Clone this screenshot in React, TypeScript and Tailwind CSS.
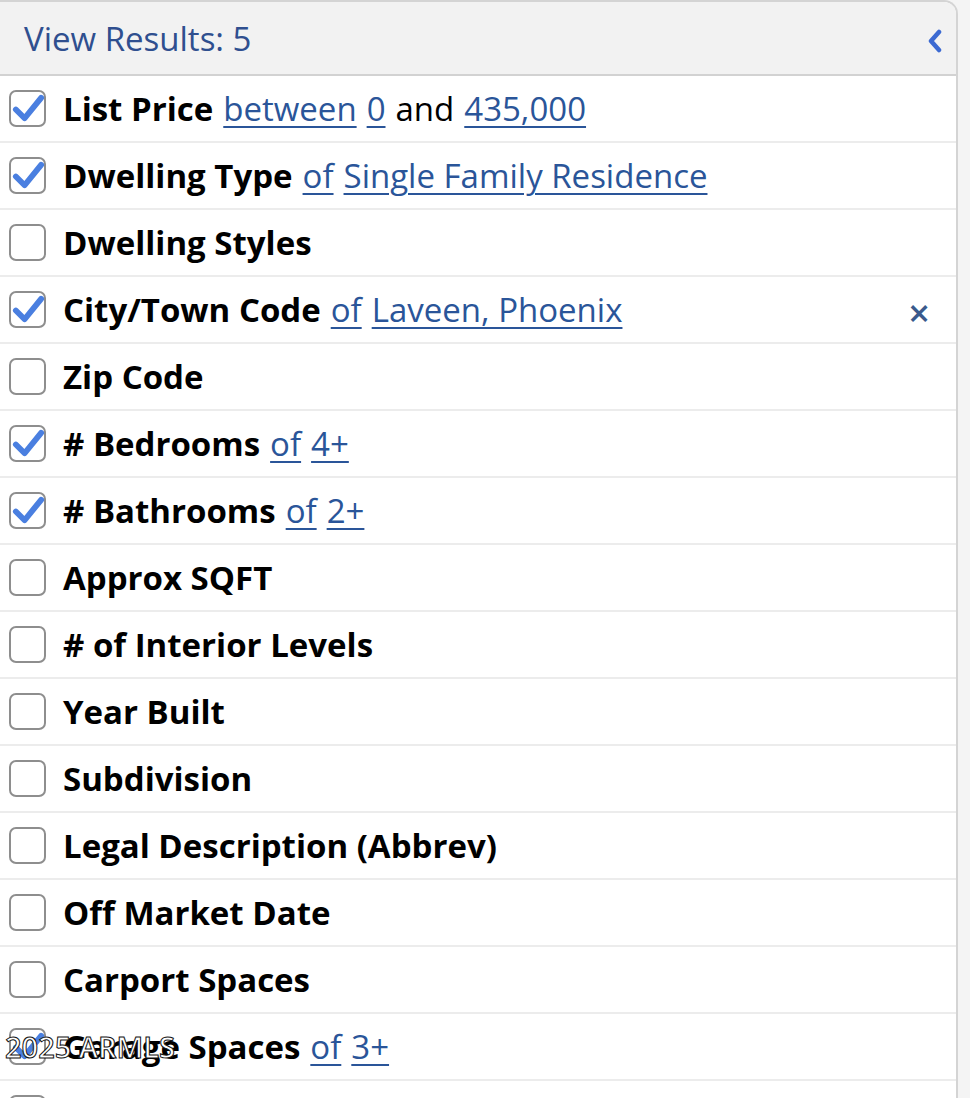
import React from 'react';

type Row = {
  label: string;
  checked: boolean;
  parts?: { text: string; link: boolean }[];
  removable?: boolean;
  watermark?: boolean;
};

const rows: Row[] = [
  {
    label: 'List Price',
    checked: true,
    parts: [
      { text: 'between', link: true },
      { text: '0', link: true },
      { text: 'and', link: false },
      { text: '435,000', link: true },
    ],
  },
  {
    label: 'Dwelling Type',
    checked: true,
    parts: [
      { text: 'of', link: true },
      { text: 'Single Family Residence', link: true },
    ],
  },
  { label: 'Dwelling Styles', checked: false },
  {
    label: 'City/Town Code',
    checked: true,
    removable: true,
    parts: [
      { text: 'of', link: true },
      { text: 'Laveen, Phoenix', link: true },
    ],
  },
  { label: 'Zip Code', checked: false },
  {
    label: '# Bedrooms',
    checked: true,
    parts: [
      { text: 'of', link: true },
      { text: '4+', link: true },
    ],
  },
  {
    label: '# Bathrooms',
    checked: true,
    parts: [
      { text: 'of', link: true },
      { text: '2+', link: true },
    ],
  },
  { label: 'Approx SQFT', checked: false },
  { label: '# of Interior Levels', checked: false },
  { label: 'Year Built', checked: false },
  { label: 'Subdivision', checked: false },
  { label: 'Legal Description (Abbrev)', checked: false },
  { label: 'Off Market Date', checked: false },
  { label: 'Carport Spaces', checked: false },
  {
    label: 'Garage Spaces',
    checked: true,
    watermark: true,
    parts: [
      { text: 'of', link: true },
      { text: '3+', link: true },
    ],
  },
  { label: '', checked: false },
];

const Checkbox = ({ checked }: { checked: boolean }) => (
  <div className="relative w-[37px] h-[37px] shrink-0 rounded-[7px] border-2 border-[#8e8e8e] bg-white">
    {checked && (
      <svg viewBox="0 0 36 36" className="absolute left-[0px] top-[-1px] w-[35px] h-[35px]">
        <path
          d="M5 19 L14 28 L31 7"
          fill="none"
          stroke="#4a7fe0"
          strokeWidth="6"
          strokeLinecap="round"
          strokeLinejoin="round"
        />
      </svg>
    )}
  </div>
);

export default function App() {
  return (
    <div className="w-[970px] h-[1098px] overflow-hidden bg-[#f4f4f4] font-['Open_Sans',sans-serif]">
      <div className="w-[958px] bg-white border-r-2 border-t-2 border-[#d4d4d4] rounded-tr-[14px]">
        <div className="h-[74px] flex items-center justify-between pl-[24px] pr-[14px] bg-[#f2f2f2] border-b-2 border-[#d2d2d2] rounded-tr-[12px]">
          <span className="text-[33px] text-[#2f4f8f] leading-none">View Results: 5</span>
          <svg viewBox="0 0 14 24" className="w-[14px] h-[26px] mt-[6px]">
            <path d="M11 3 L3 12 L11 21" fill="none" stroke="#3c6ad2" strokeWidth="4.5" strokeLinecap="round" strokeLinejoin="round" />
          </svg>
        </div>
        {rows.map((r, i) => (
          <div
            key={i}
            className="relative h-[67px] flex items-center pl-[9px] pr-[24px] border-b-2 border-[#ececec]"
          >
            <Checkbox checked={r.checked} />
            <div className="ml-[17px] flex items-baseline gap-[10px] text-[33px] leading-none whitespace-nowrap">
              <span className="font-bold text-black">{r.label}</span>
              {r.parts?.map((p, j) =>
                p.link ? (
                  <span key={j} className="text-[#2a5599] underline underline-offset-[5px] decoration-2">
                    {p.text}
                  </span>
                ) : (
                  <span key={j} className="text-black">
                    {p.text}
                  </span>
                )
              )}
            </div>
            {r.removable && (
              <span className="ml-auto mr-[2px] text-[#3a5a8c] text-[38px] font-semibold leading-none mt-[4px]">×</span>
            )}
            {r.watermark && (
              <span className="absolute left-[5px] top-[18px] text-[29px] font-semibold leading-none text-white [-webkit-text-stroke:1px_#111]">
                2025 ARMLS
              </span>
            )}
          </div>
        ))}
      </div>
    </div>
  );
}
